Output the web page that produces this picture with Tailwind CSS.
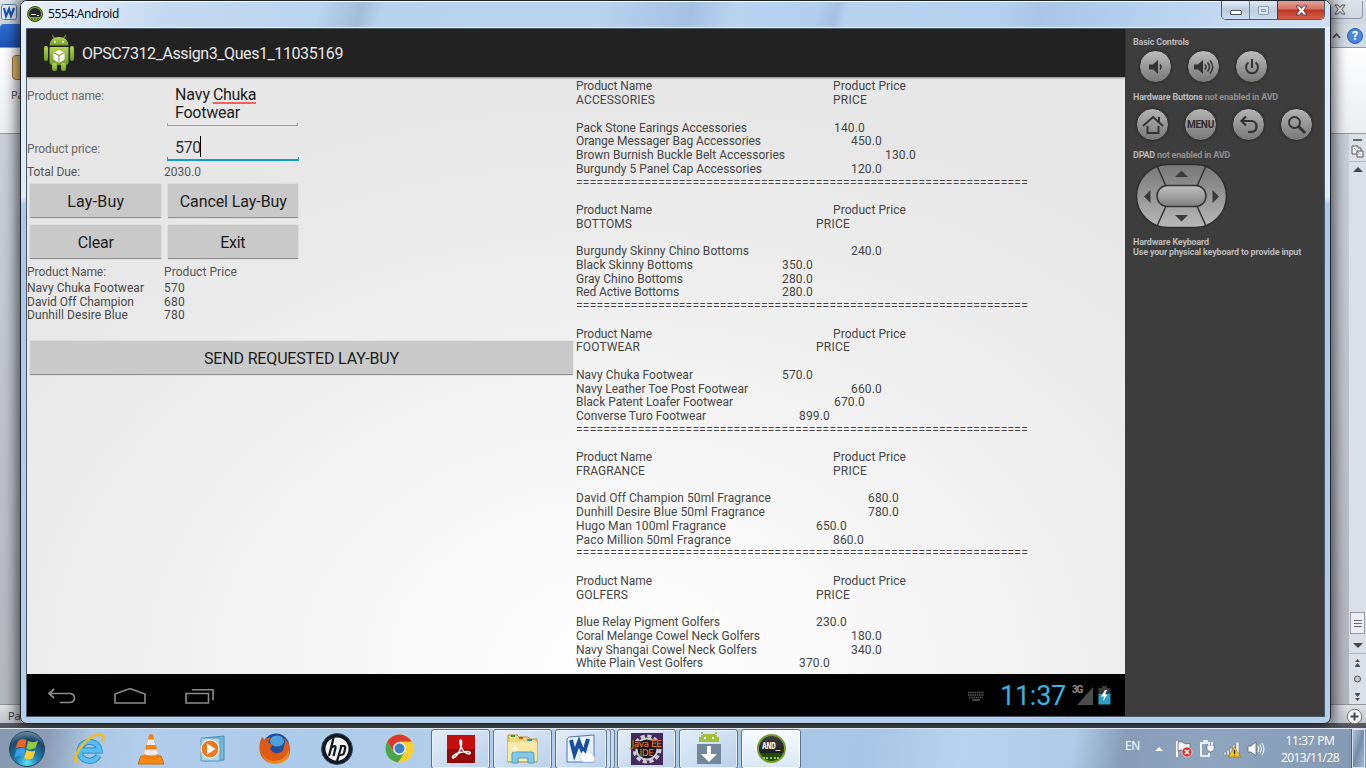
<!DOCTYPE html>
<html lang="en">
<head>
<meta charset="utf-8">
<title>5554:Android</title>
<script src="https://cdn.jsdelivr.net/npm/@tailwindcss/browser@4"></script>
</head>
<body class="relative h-[768px] w-[1366px] overflow-hidden bg-[#55585d] font-['Roboto',sans-serif]">

<!-- Word window in the background -->
<div class="absolute inset-x-0 top-0 flex h-[723px] flex-col">
  <div class="flex h-6 items-center justify-between bg-gradient-to-b from-[#dfe4ea] to-[#cdd5df] pl-px pt-px">
    <svg width="17" height="17" viewBox="0 0 17 17"><rect x=".5" y=".5" width="15" height="15" rx="2" fill="#e6effa" stroke="#5c86bd"/><path d="M3 4l2 8 3-7 2 7 3-8" fill="none" stroke="#1d58ac" stroke-width="2.2"/></svg>
    <div class="mr-[3px] flex h-[18px] w-[48px] -translate-y-[3px] items-center justify-center rounded-br border-r border-b border-[#8b95a3] pl-[2px]">
      <svg width="12" height="11" viewBox="0 0 12 11"><path d="M1 1h3l2 2.6L8 1h3L7.8 5.400 11 10H8L6 7.300 4 10H1l3.200-4.600z" fill="#f4f4f4" stroke="#50545c"/></svg>
    </div>
  </div>
  <div class="flex h-[23px] items-center justify-between bg-[#d5dce5]">
    <div class="h-full w-6 rounded-tl bg-gradient-to-b from-[#2d6fd3] to-[#1e54b4]"></div>
    <div class="flex items-center gap-1.5 pr-[3px]">
      <svg width="9" height="8" viewBox="0 0 9 8"><path d="M1 6l3.500-4L8 6" fill="none" stroke="#4c5059" stroke-width="1.800"/></svg>
      <div class="flex size-4 items-center justify-center rounded-full border border-[#2a5db4] bg-[#4b86dc] text-[12px] font-bold text-white">?</div>
    </div>
  </div>
  <div class="flex h-[87px] flex-col border-y border-[#9299a3] bg-gradient-to-b from-white to-[#eceef1]">
    <div class="mt-[7px] ml-3 h-[25px] w-4 rounded-sm border border-[#9c7a3c] bg-[#e2bd6c]"></div>
    <div class="mt-[7px] ml-[11px] font-['Open_Sans'] text-[11px] leading-4 text-[#444]">Pa</div>
  </div>
  <div class="flex flex-1 justify-end bg-gradient-to-b from-[#cbd0d7] to-[#b4b7bc]">
    <div class="flex w-[17px] flex-col items-center bg-[#dbdfe6]">
      <div class="mt-[5px] h-0.5 w-[9px] bg-[#666a70]"></div>
      <svg class="mt-1" width="13" height="13" viewBox="0 0 13 13" fill="#f3f0f4" stroke="#555a63"><path d="M1 1h6v2h3v6H1z"/><path d="M6 6h6v6H6z"/><path d="M3 3l7 7" stroke-dasharray="1 1"/></svg>
      <div class="mt-[3px] h-px w-full bg-[#b4b9c1]"></div>
      <div class="mt-[5px] size-0 border-x-[5px] border-b-[5px] border-x-transparent border-b-[#45484d]"></div>
      <div class="mt-auto flex h-[22px] w-[15px] flex-col items-center justify-center gap-[2px] border border-[#979ca5] bg-[#eceef2]"><i class="h-px w-2 bg-[#676b72]"></i><i class="h-px w-2 bg-[#676b72]"></i><i class="h-px w-2 bg-[#676b72]"></i></div>
      <div class="mt-[9px] size-0 border-x-[5px] border-t-[5px] border-x-transparent border-t-[#45484d]"></div>
      <div class="mt-[5px] h-px w-full bg-[#b4b9c1]"></div>
      <svg class="mt-1" width="9" height="46" viewBox="0 0 9 46" fill="#4d5056"><path d="M4.500 1L7 4H2zM4.500 5L7 8H2zM2 8h5v1H2z"/><circle cx="4.500" cy="21" r="3" fill="#c5c8cd" stroke="#4d5056"/><path d="M2 35h5v1H2zM2 36h5l-2.500 3zM2 40h5l-2.500 3z"/></svg>
    </div>
  </div>
  <div class="flex h-[19px] items-center justify-between border-t border-[#90949b] bg-gradient-to-b from-[#dfe1e5] to-[#c1c4ca] pr-[3px] pl-[8px]">
    <span class="pt-1 font-['Open_Sans'] text-[11px] text-[#333]">Pa</span>
    <svg class="mb-[-5px]" width="17" height="17" viewBox="0 0 17 17"><circle cx="8.500" cy="8.500" r="7.200" fill="#f4f4f6" stroke="#6f7379"/><path d="M8.500 4.500v8M4.500 8.500h8" stroke="#44474c" stroke-width="2"/></svg>
  </div>
</div>

<!-- Emulator window -->
<div class="absolute top-0 left-5 flex h-[724px] w-[1311px] flex-col rounded-[7px] border border-[#1e242c] bg-[linear-gradient(to_bottom,#e4eefa_0px,#dfeaf7_196px,#a9c9ea_204px,#b4cfec_100%)] px-[5px] pb-[6px] shadow-[0_0_14px_3px_rgba(0,0,0,.65)]">
  <div class="-mx-[5px] flex h-[27px] shrink-0 items-start rounded-t-[6px] border-t border-t-white bg-[linear-gradient(105deg,#e9f1fa_0px,#dce8f6_60px,#c5daf0_140px,#bbd4ee_290px,#a3bcd8_330px,#b9d2ec_350px,#b9d2ee_560px,#a6c1e0_650px,#b9d3ef_690px,#b2cfec_770px,#a6c2e0_790px,#b8d2ee_800px,#b5d0ec_950px,#a9c6e4_985px,#b5d0ed_1080px,#c6daf1_1180px,#d3e2f4_1300px)] shadow-[inset_0_-1px_0_#e8f2fb]">
    <div class="flex items-center gap-[5px] pt-[4px] pl-[6px]">
      <svg width="16" height="16" viewBox="0 0 16 16"><circle cx="8" cy="8" r="7.500" fill="#86ad27" stroke="#36460f"/><path d="M2 8a6 6 0 0 1 12 0q0 2-1 3H3Q2 10 2 8z" fill="#24282b"/><path d="M4 8.500h5M10 9.500h2" stroke="#fff"/><path d="M4 13h8" stroke="#345" stroke-dasharray="2 1"/></svg>
      <span class="font-['Open_Sans'] text-[12px] leading-4 text-black" data-w="71">5554:Android</span>
    </div>
    <div class="mr-[5px] ml-auto -mt-px flex h-[19px] overflow-hidden rounded-b-[5px] border border-t-0 border-[#4d5b6b]">
      <div class="flex w-[28px] items-end justify-center border-r border-[#6f8094] bg-gradient-to-b from-[#e3edf7] via-[#bccbdd] to-[#cfdeee] pb-[4px]"><i class="h-[5px] w-3 rounded-[1px] border border-[#4c5663] bg-white"></i></div>
      <div class="flex w-[27px] items-center justify-center bg-gradient-to-b from-[#dce8f5] via-[#bfcfe2] to-[#cbdcef]"><i class="flex h-[9px] w-[11px] items-center justify-center rounded-[1px] border border-[#8f9db0] bg-[#dce6f2]"><b class="h-[3px] w-[5px] border border-[#8f9db0]"></b></i></div>
      <div class="flex w-[47px] items-center justify-center border-l border-[#6b2a22] bg-[linear-gradient(to_bottom,#e3a398_0,#d4705f_45%,#bd3424_50%,#d5614b_100%)]"><svg width="13" height="11" viewBox="0 0 13 11"><path d="M1 1h3.500l2 2.500 2-2.500H12L8.600 5.400 12 10H8.500l-2-2.500-2 2.500H1l3.400-4.600z" fill="#fff" stroke="#5b3c43"/></svg></div>
    </div>
  </div>

  <div class="flex shrink-0 border border-[#4b5866]">
    <!-- Device screen -->
    <div class="flex w-[1098px] shrink-0 flex-col">
      <div class="relative z-10 flex h-[48px] items-center bg-[#222] pl-[16px] shadow-[0_1px_2px_rgba(0,0,0,.45)]">
        <svg width="32" height="38" viewBox="0 0 32 38"><defs><linearGradient id="dr" x2="0" y2="1"><stop stop-color="#b5d453"/><stop offset="1" stop-color="#6f9a2a"/></linearGradient></defs><g fill="url(#dr)"><path d="M9 1l3 4M23 1l-3 4" stroke="#7b9d32" stroke-width="1.200"/><path d="M6.500 11.500Q7 3 16 3t9.500 8.500z"/><path d="M6.500 13h19v15q0 3-3 3h-13q-3 0-3-3z"/><rect x="1" y="12" width="4" height="15" rx="2"/><rect x="27" y="12" width="4" height="15" rx="2"/><rect x="9" y="29" width="5" height="8" rx="2"/><rect x="18" y="29" width="5" height="8" rx="2"/></g><circle cx="12" cy="8" r=".9" fill="#fff"/><circle cx="20" cy="8" r=".9" fill="#fff"/><path d="M16 16l5.500 2.500v7L16 29l-5.500-3.500v-7z" fill="#fff"/><path d="M10.500 18.500L16 21.500l5.500-3M16 21.500V29" fill="none" stroke="#84a93c" stroke-width="1.200"/></svg>
        <span class="ml-[7px] pt-[2px] text-[16px] text-[#e8e8e8]" data-w="261">OPSC7312_Assign3_Ques1_11035169</span>
      </div>

      <div class="flex h-[597px] overflow-hidden bg-[radial-gradient(ellipse_760px_560px_at_590px_590px,#fdfdfd_0%,#fbfbfb_20%,#f0f0f0_62%,#e7e7e7_100%)] text-[12px] text-[#555]">
        <!-- Lay-buy form -->
        <div class="flex w-[549px] flex-col">
          <div class="grid h-[52px] grid-cols-[137px_1fr]">
            <div class="pt-[10px] leading-[18px]"><span data-w="77" class="text-[#686868]">Product name:</span></div>
            <div class="flex h-[49px] w-[136px] flex-col pl-[3px]">
              <div class="ml-[8px] pt-[9px] text-[16px] leading-[18px] text-[#1c1c1c]"><span data-w="35">Navy</span> <span class="relative -ml-px" data-w="43">Chuka<i class="absolute inset-x-0 bottom-[0px] h-[2px] bg-[#f4605c]"></i></span><br><span data-w="65">Footwear</span></div>
              <div class="mt-auto h-[3px] w-[131px] border-x border-b border-[#a0a0a0]"></div>
            </div>
          </div>
          <div class="grid h-[34px] grid-cols-[137px_1fr]">
            <div class="pt-[11px] leading-[18px]"><span data-w="73" class="text-[#686868]">Product price:</span></div>
            <div class="flex h-[32px] w-[136px] flex-col pl-[3px]">
              <div class="ml-[8px] flex h-[28px] pt-[7px] text-[16px] leading-[24px] text-[#333]"><span data-w="26">570</span><i class="-ml-px h-[21px] w-px bg-black"></i></div>
              <div class="mt-auto h-[4px] w-[132px] border-x border-b-2 border-[#0e9dcd]"></div>
            </div>
          </div>
          <div class="grid h-[18px] grid-cols-[137px_1fr] leading-[19px]"><span><span data-w="53">Total Due:</span></span><span><span data-w="37">2030.0</span></span></div>
          <div class="mt-[3px] ml-[3px] grid w-[268px] grid-cols-2 gap-x-[7px] gap-y-[7px] text-[16px] text-[#1c1c1c]">
            <div class="flex h-[34px] items-center justify-center border-b border-[#909090] bg-[#c9c9c9] pt-0.5 pl-px shadow-[0_0_1px_#aaa]"><span data-w="57">Lay-Buy</span></div>
            <div class="flex h-[34px] items-center justify-center border-b border-[#909090] bg-[#c9c9c9] pt-0.5 pl-px shadow-[0_0_1px_#aaa]"><span data-w="107">Cancel Lay-Buy</span></div>
            <div class="flex h-[34px] items-center justify-center border-b border-[#909090] bg-[#c9c9c9] pt-0.5 pl-px shadow-[0_0_1px_#aaa]"><span data-w="36">Clear</span></div>
            <div class="flex h-[34px] items-center justify-center border-b border-[#909090] bg-[#c9c9c9] pt-0.5 shadow-[0_0_1px_#aaa]"><span data-w="25">Exit</span></div>
          </div>
          <div class="mt-[5px] grid h-[17px] grid-cols-[137px_1fr] leading-[17px]"><span><span data-w="79">Product Name:</span></span><span><span data-w="73">Product Price</span></span></div>
          <div class="mt-px grid grid-cols-[137px_1fr] leading-[13.7px] text-[#484848]">
            <span><span data-w="117">Navy Chuka Footwear</span></span><span><span data-w="21">570</span></span>
            <span><span data-w="107">David Off Champion</span></span><span><span data-w="21">680</span></span>
            <span><span data-w="101">Dunhill Desire Blue</span></span><span><span data-w="21">780</span></span>
          </div>
          <div class="mt-[18px] ml-[3px] flex h-[34px] w-[543px] items-center justify-center border-b border-[#909090] bg-[#cacaca] pt-0.5 text-[16px] text-[#1c1c1c] shadow-[0_0_1px_#aaa]"><span data-w="195">SEND REQUESTED LAY-BUY</span></div>
        </div>

        <!-- Price list -->
        <div id="prices" class="flex flex-col pt-[3.400px] leading-[13.740px] text-[#454545]"></div>
      </div>

      <!-- Navigation bar -->
      <div class="flex h-[42px] items-center bg-black pt-px">
        <svg class="ml-[20px]" width="30" height="18" viewBox="0 0 30 18" fill="none" stroke="#8b8b8b" stroke-width="1.700"><path d="M7 2L2 6.500 7 11M2 6.500h20q5.500 0 5.500 4.500t-5.500 4.500h-9"/></svg>
        <svg class="ml-[36px]" width="34" height="18" viewBox="0 0 34 18" fill="none" stroke="#8b8b8b" stroke-width="1.600"><path d="M2 16V7L17 1.500 32 7v9z"/></svg>
        <svg class="ml-[37px]" width="32" height="18" viewBox="0 0 32 18" fill="none" stroke="#8b8b8b" stroke-width="1.600"><path d="M2 6.500h22.500V16H2zM8 2.800h21v10.500"/></svg>
        <svg class="mt-px ml-auto" width="18" height="10" viewBox="0 0 18 10" stroke="#5d5d5d" stroke-width="1.500"><path d="M1 1.500h16M1 4h16M2 6.500h14" stroke-dasharray="1.500 .7"/><path d="M5 9h8"/></svg>
        <span class="ml-[15px] pt-[2px] text-[27px] leading-none text-[#33b5e5]" data-w="66">11:37</span>
        <span class="mb-[11px] ml-[6px] text-[10px] leading-none font-bold text-[#8c8c8c]" data-w="10">3G</span>
        <svg class="-ml-[5px]" width="16" height="18" viewBox="0 0 16 18"><path d="M0 18L16 0v18z" fill="#4b4b4b"/></svg>
        <svg class="mr-[14px] ml-[5px]" width="13" height="19" viewBox="0 0 13 19"><path d="M4 0h5v2h3.500v7H.5V2H4z" fill="#3b3b3b"/><path d="M.5 8h12v10.500H.5z" fill="#2f9cc6"/><path d="M7 4L3 10.500h3L5 15l4.500-6.500H7L9 4z" fill="#fff"/></svg>
      </div>
    </div>

    <!-- Hardware controls -->
    <div class="flex flex-1 flex-col bg-[#3d3d3d] pl-2 text-[9px] leading-[10px] font-bold text-[#b9b9b9]">
      <div class="mt-[8px]"><span data-w="56">Basic Controls</span></div>
      <div class="mt-[3px] ml-[6px] flex gap-[15px]">
        <div class="flex size-[33px] items-center justify-center rounded-full border border-[#303030] bg-gradient-to-b from-[#bdbdbd] to-[#777] shadow-[0_0_2px_#222]"><svg width="19" height="18" viewBox="0 0 19 18"><path d="M3 6.500h4L12 2v14l-5-4.500H3z" fill="#333"/><path d="M14 6.500q2 2.500 0 5" fill="none" stroke="#333" stroke-width="1.500"/></svg></div>
        <div class="flex size-[33px] items-center justify-center rounded-full border border-[#303030] bg-gradient-to-b from-[#bdbdbd] to-[#777] shadow-[0_0_2px_#222]"><svg width="23" height="18" viewBox="0 0 23 18"><path d="M2 6.500h4L11 2v14l-5-4.500H2z" fill="#333"/><path d="M13 6.500q2 2.500 0 5M15.500 4.500q4 4.500 0 9M18 2.500q5.500 6.500 0 13" fill="none" stroke="#333" stroke-width="1.500"/></svg></div>
        <div class="flex size-[33px] items-center justify-center rounded-full border border-[#303030] bg-gradient-to-b from-[#bdbdbd] to-[#777] shadow-[0_0_2px_#222]"><svg width="18" height="20" viewBox="0 0 18 20" fill="none" stroke="#333" stroke-width="2"><path d="M9 2v9M5.500 5.500a6 6 0 1 0 7 0"/></svg></div>
      </div>
      <div class="mt-[9px] whitespace-nowrap"><span data-w="145">Hardware Buttons <span class="text-[#8f8f8f]">not enabled in AVD</span></span></div>
      <div class="mt-[6px] ml-[3px] flex gap-[15px]">
        <div class="flex size-[33px] items-center justify-center rounded-full border border-[#303030] bg-gradient-to-b from-[#b5b5b5] to-[#777] shadow-[0_0_2px_#222]"><svg width="24" height="22" viewBox="0 0 24 22" fill="none" stroke="#333" stroke-width="2"><path d="M2 12L12 3l10 9M18 8V3M6.500 12v7H17.500V12"/></svg></div>
        <div class="flex size-[33px] items-center justify-center rounded-full border border-[#303030] bg-gradient-to-b from-[#b5b5b5] to-[#777] text-[10px] text-[#2c2c2c] shadow-[0_0_2px_#222]"><span data-w="27">MENU</span></div>
        <div class="flex size-[33px] items-center justify-center rounded-full border border-[#303030] bg-gradient-to-b from-[#b5b5b5] to-[#777] shadow-[0_0_2px_#222]"><svg width="20" height="20" viewBox="0 0 20 20" fill="none" stroke="#333" stroke-width="2.200"><path d="M7 1.500L2.500 6 7 10.500M2.500 6H12q5.500 0 5.500 5.500T12 17H9"/></svg></div>
        <div class="flex size-[33px] items-center justify-center rounded-full border border-[#303030] bg-gradient-to-b from-[#b5b5b5] to-[#777] shadow-[0_0_2px_#222]"><svg width="20" height="20" viewBox="0 0 20 20" fill="none" stroke="#333" stroke-width="2"><circle cx="7.500" cy="7.500" r="5.500"/><path d="M11.500 11.500L18 18" stroke-width="2.800"/></svg></div>
      </div>
      <div class="mt-[9px]"><span data-w="97">DPAD <span class="text-[#8f8f8f]">not enabled in AVD</span></span></div>
      <svg class="mt-[2px] ml-[2px]" width="94" height="68" viewBox="0 0 94 68"><defs><linearGradient id="pad" x2="0" y2="1"><stop stop-color="#777"/><stop offset="1" stop-color="#b8b8b8"/></linearGradient><linearGradient id="mid" x2="0" y2="1"><stop stop-color="#c0c0c0"/><stop offset="1" stop-color="#808080"/></linearGradient></defs><rect x="1.500" y="2.500" width="90" height="63" rx="31.500" fill="url(#pad)" stroke="#2d2d2d" stroke-width="1.500"/><path d="M22 4l9 20M71 4l-9 20M31 44l-9 20M62 44l9 20" stroke="#333" stroke-width="1.500"/><rect x="22" y="23.500" width="49" height="21" rx="10.500" fill="url(#mid)" stroke="#333" stroke-width="1.500"/><path d="M40 15l6.500-6.500L53 15zM40 53h13l-6.500 6.500zM15.500 28v13L9 34.500zM77.500 28v13l6.500-6.500z" fill="#3a3a3a"/></svg>
      <div class="mt-[7px]"><span data-w="76">Hardware Keyboard</span></div>
      <div class="whitespace-nowrap"><span data-w="168">Use your physical keyboard to provide input</span></div>
    </div>
  </div>
</div>

<!-- Taskbar -->
<div class="absolute inset-x-0 bottom-0 flex h-10 items-center border-t border-[#dce9f5] bg-[linear-gradient(100deg,#8799af_0px,#8c9eb5_50px,#abc6e3_90px,#b1ceec_140px,#accbe9_300px,#b4cfec_500px,#a6c5e4_850px,#b7d3ef_950px,#afcbe9_1060px,#889db5_1110px,#8fa5be_1200px,#8298b0_1366px)]">
  <div class="flex w-[58px] justify-start pl-[8px]">
    <svg width="38" height="38" viewBox="0 0 38 38"><defs><radialGradient id="orb" cx=".5" cy=".9" r=".9"><stop stop-color="#5ee1fb"/><stop offset=".35" stop-color="#1c82b4"/><stop offset=".75" stop-color="#1d466a"/><stop offset="1" stop-color="#7693aa"/></radialGradient></defs><circle cx="19" cy="19" r="17.500" fill="url(#orb)" stroke="#27435d"/><path d="M10 11q5-3.500 8.500-.5L16.500 18q-4-2-9 .5z" fill="#ee6327"/><path d="M20 11q5 2.500 10-.5L27.500 18q-5 2.500-9 .5z" fill="#92c83e"/><path d="M7 20q5-3 9 0l-2 7.500q-4-2-9 .5z" transform="translate(1.500 -.5)" fill="#3ba0e8"/><path d="M18.500 20q5 2.500 9 .5L25 28q-5 2.500-9 0z" fill="#fccb2e"/></svg>
  </div>
  <div class="flex w-[62px] justify-center"><svg width="34" height="34" viewBox="0 0 34 34"><path d="M26.500 22.500a10 9.500 0 1 1 1-5H10" transform="translate(0 1)" fill="none" stroke="#1e7fbf" stroke-width="6"/><path d="M26.500 22.500a10 9.500 0 1 1 1-5H10" transform="translate(0 1)" fill="none" stroke="#58bdf0" stroke-width="4.600"/><path d="M5 31C-3 24 20-2 30 3q3 2 0 7" fill="none" stroke="#f3bd22" stroke-width="2.600"/></svg></div>
  <div class="flex w-[62px] justify-center"><svg width="28" height="32" viewBox="0 0 28 32"><path d="M4 23h20l3 8H1z" fill="#f58a17" stroke="#cc6a08"/><path d="M12 2q2-2 4 0l6 22q-8 5-16 0z" fill="#f47e12"/><path d="M11 6.500h6l1.500 5.500h-9zM8 16.500h12l1.200 4.500q-7 3-14.400 0z" fill="#ececec"/></svg></div>
  <div class="flex w-[62px] justify-center"><svg width="30" height="28" viewBox="0 0 30 28"><path d="M6 3l20-2v24L6 26z" fill="#75b8d9" stroke="#458eb5"/><path d="M3 3h19v23H3z" fill="#a8d6ec" stroke="#5d9dbe"/><circle cx="12" cy="14" r="9" fill="#f0781e" stroke="#fff"/><path d="M9 8.500l8.500 5.500L9 19.500z" fill="#fff"/></svg></div>
  <div class="flex w-[62px] justify-center"><svg width="34" height="34" viewBox="0 0 34 34"><circle cx="18" cy="15" r="13.500" fill="#1b4f9d"/><ellipse cx="19" cy="9" rx="7" ry="5.500" fill="#4aa0dd"/><path d="M2 10L4 5l3 3q3-3 6-2-3 2-3 5l5 1-3 4q2 6 8 5 6-1 6-7 2-4 0-8 5 4 6 10 1 9-6 13-8 5-17 1Q-1 24 2 10z" fill="#df5a16"/><path d="M4 14q-1 14 12 15 11 0 15-11 1 13-12 14Q3 32 4 14z" fill="#f49a20" opacity=".7"/></svg></div>
  <div class="flex w-[62px] justify-center"><svg width="34" height="34" viewBox="0 0 34 34"><circle cx="17" cy="17" r="15.500" fill="#10171f" stroke="#354960"/><circle cx="17" cy="17" r="11.500" fill="#f2f2f2"/><path d="M13.500 6L9 24M11 16q5-4 4.500 0L13.500 24M21.500 14L17 29M20 14h3.500q2.500 0 1.500 3l-1 4q-.6 2-3 2h-3" fill="none" stroke="#10171f" stroke-width="2.200"/></svg></div>
  <div class="flex w-[62px] justify-center"><svg width="29" height="29" viewBox="0 0 29 29"><circle cx="14.500" cy="14.500" r="14" fill="#fbcf2f"/><path d="M2.400 7.500A14 14 0 0 1 26.600 7.500H14.500L8.500 18z" fill="#d93a2d"/><path d="M2.400 7.500A14 14 0 0 0 13 28.500L20 18H8.500z" fill="#4ba64a"/><circle cx="14.500" cy="14.500" r="6.500" fill="#f4f4f4"/><circle cx="14.500" cy="14.500" r="5" fill="#3b7fcf"/></svg></div>
  <div class="ml-px flex h-10 gap-[3px]">
    <div class="flex w-[59px] items-center justify-center rounded-[3px] border border-[#5d7188] bg-gradient-to-br from-[#e4edf7] to-[#b9d0ea] shadow-[inset_0_0_0_1px_#e9f2fb]"><svg width="28" height="28" viewBox="0 0 28 28"><path d="M0 0h28v28H0z" fill="#c40d0f"/><path d="M0 14h28v14H0z" fill="#940809"/><path d="M13.500 5q2 0 .5 7-3 9-7.500 11-2 0 0-2.500 5-4 15-4 3 1 1 2.500-5 0-8.500-7Q12 5 13.500 5z" fill="none" stroke="#fff" stroke-width="1.500"/></svg></div>
    <div class="flex w-[59px] items-center justify-center rounded-[3px] border border-[#5d7188] bg-gradient-to-br from-[#e4edf7] to-[#b9d0ea] shadow-[inset_0_0_0_1px_#e9f2fb]"><svg width="34" height="32" viewBox="0 0 34 32"><path d="M2 2h9l2 2h9l2 2h7v23H2z" fill="#f0d779" stroke="#b6943b"/><path d="M4 9h27v19H2V9z" fill="#f8e9a5"/><path d="M5 3h4" stroke="#3a9a48" stroke-width="2"/><path d="M13 5h4" stroke="#d64b30" stroke-width="2"/><path d="M21 7h5" stroke="#3583c7" stroke-width="2"/><path d="M6 30V21q0-2 2-2h18q2 0 2 2v9h-6v-5H12v5z" fill="#83c8e6" stroke="#4d9dc3"/><path d="M9 12l1 3 3 1-3 1-1 3-1-3-3-1 3-1z" fill="#fff"/></svg></div>
    <div class="flex w-[60px]">
      <div class="flex w-[52px] items-center justify-center rounded-[3px] border border-[#5d7188] bg-gradient-to-br from-[#e4edf7] to-[#b9d0ea] shadow-[inset_0_0_0_1px_#e9f2fb]"><svg width="30" height="30" viewBox="0 0 30 30"><path d="M3 3l25-2v27H1V5z" fill="#e9f1fb" stroke="#4978b5"/><path d="M5 6l3.500 14L13 8l4.500 12L22 5" fill="none" stroke="#174f9f" stroke-width="4"/><path d="M13 23l4-6 3 3 3-5 6 9-1 4H17z" fill="#fff" stroke="#b7c7de" stroke-width=".7"/></svg></div>
      <div class="w-1 rounded-r-[3px] border-y border-r border-[#6f849c] bg-[#cfdff0]"></div><div class="w-1 rounded-r-[3px] border-y border-r border-[#6f849c] bg-[#c5d7eb]"></div>
    </div>
    <div class="-ml-px flex w-[59px] items-center justify-center rounded-[3px] border border-[#5d7188] bg-gradient-to-br from-[#e4edf7] to-[#b9d0ea] shadow-[inset_0_0_0_1px_#e9f2fb]">
      <div class="relative flex size-8 flex-col items-center bg-[#44295d] pt-[7px] font-['DejaVu_Sans'] text-[9px] leading-[9px] text-[#ff8420] [text-shadow:0_0_1px_#1a1420,0_0_2px_#1a1420,0_0_1px_#1a1420]">
        <svg class="absolute inset-0" width="32" height="32" viewBox="0 0 32 32" fill="none"><circle cx="16" cy="16" r="13" stroke="#cfcfd4" stroke-width="3" stroke-dasharray="4.200 2.600"/><circle cx="16" cy="16" r="10.500" fill="#201b28" stroke="#cfcfd4" stroke-width="2"/><path d="M1 8h30v8H1z" fill="#201b28" opacity=".75"/></svg>
        <span class="relative block whitespace-nowrap" data-w="30">Java EE</span><span class="relative block" data-w="14">IDE</span>
      </div>
    </div>
    <div class="flex w-[59px] items-center justify-center rounded-[3px] border border-[#5d7188] bg-gradient-to-br from-[#e4edf7] to-[#b9d0ea] shadow-[inset_0_0_0_1px_#e9f2fb]"><svg width="24" height="33" viewBox="0 0 24 33"><path d="M4 0h2v2h12V0h2v2h-2v1h2v2h2v5H2V5h2V3h2V2H4z" fill="#a2c139"/><path d="M7 5h2v2H7zM15 5h2v2h-2z" fill="#e5eef8"/><path d="M0 12h24v20H0z" fill="#71879b"/><path d="M10 14h4v8h6l-8 8-8-8h6z" fill="#fff"/></svg></div>
    <div class="flex w-[60px] items-center justify-center rounded-[3px] border border-[#5d7188] bg-gradient-to-b from-[#f8fbfe] to-[#d8e7f6] shadow-[inset_0_0_0_1px_#fff]">
      <div class="relative flex size-[29px] items-center justify-center rounded-full border-2 border-[#789c28] bg-[linear-gradient(to_bottom,#3c4043_0,#1c1f20_66%,#27480d_68%,#1f5410_100%)] pb-1 font-['DejaVu_Sans_Mono'] text-[8px] leading-none font-bold text-white"><span data-w="18">AND_</span><i class="absolute bottom-[2px] h-0 w-4 border-b-2 border-dotted border-[#9ccb2d]"></i></div>
    </div>
  </div>

  <!-- Tray -->
  <div class="ml-auto flex items-center self-stretch text-white">
    <span class="mb-[5px] font-['Open_Sans'] text-[12px]" data-w="15">EN</span>
    <i class="ml-[15px] size-0 border-x-4 border-b-4 border-x-transparent border-b-white"></i>
    <svg class="ml-[12px]" width="18" height="18" viewBox="0 0 18 18"><path d="M2 1v16" stroke="#fff" stroke-width="2"/><path d="M3 2q4-1 6 1t6 0v8q-3 2-6 0t-6 0z" fill="#f4f6f9" stroke="#4c596a" stroke-width=".7"/><circle cx="12" cy="12" r="5" fill="#d92d26" stroke="#fff" stroke-width=".6"/><path d="M9.800 9.800l4.400 4.400m0-4.400l-4.400 4.400" stroke="#fff" stroke-width="1.500"/></svg>
    <svg class="ml-[6px]" width="16" height="18" viewBox="0 0 16 18" fill="none" stroke="#fff" stroke-width="1.700"><path d="M9 3H2v13h8v-3M4 1h5"/><path d="M8 5h7v4q0 2-3.500 3Q8 11 8 9z" fill="#fff" stroke="#566579" stroke-width=".7"/><path d="M10 2v3M13 2v3"/></svg>
    <svg class="ml-[8px]" width="18" height="18" viewBox="0 0 18 18"><path d="M1 12h2v3H1zM4 10h2v5H4zM7 8h2v7H7zM10 5h2v10h-2zM13 2h3v13h-3z" fill="#f1f3f6" stroke="#59697c" stroke-width=".4"/><path d="M11.500 6.500L17.500 17h-12z" fill="#f7c82a" stroke="#8d6b14" stroke-width=".6"/><path d="M11.500 10v4M11.500 15v1" stroke="#222" stroke-width="1.300"/></svg>
    <svg class="ml-[6px]" width="18" height="16" viewBox="0 0 18 16"><path d="M1 5h3l5-4v14l-5-4H1z" fill="#fff" stroke="#546377" stroke-width=".8"/><path d="M11 5q1.500 3 0 6M13 3.500q3 4.500 0 9M15 2q4 6 0 12" fill="none" stroke="#fff"/></svg>
    <div class="ml-[16px] flex w-[58px] flex-col items-center pt-px font-['Open_Sans'] text-[12px] leading-[17px] whitespace-nowrap"><span data-w="49">11:37 PM</span><span data-w="58">2013/11/28</span></div>
    <div class="ml-[13px] h-full w-[13px] border border-[#d5e1ee] bg-gradient-to-br from-[#b3c5d9] via-[#748da7] to-[#a5bad1] shadow-[-1px_0_0_#4c5c6e]"></div>
    <div class="w-px"></div>
  </div>
</div>

<script>
// Each block: category, category width, left offset of its PRICE label, then [name, name width, price, price offset].
const blocks = [
  ["ACCESSORIES", 79, 257, [["Pack Stone Earings Accessories",171,"140.0",258],["Orange Messager Bag Accessories",185,"450.0",275],["Brown Burnish Buckle Belt Accessories",209,"130.0",309],["Burgundy 5 Panel Cap Accessories",186,"120.0",275]]],
  ["BOTTOMS", 56, 240, [["Burgundy Skinny Chino Bottoms",173,"240.0",275],["Black Skinny Bottoms",117,"350.0",206],["Gray Chino Bottoms",107,"280.0",206],["Red Active Bottoms",103,"280.0",206]]],
  ["FOOTWEAR", 64, 240, [["Navy Chuka Footwear",117,"570.0",206],["Navy Leather Toe Post Footwear",172,"660.0",275],["Black Patent Loafer Footwear",157,"670.0",258],["Converse Turo Footwear",130,"899.0",223]]],
  ["FRAGRANCE", 69, 257, [["David Off Champion 50ml Fragrance",195,"680.0",292],["Dunhill Desire Blue 50ml Fragrance",189,"780.0",292],["Hugo Man 100ml Fragrance",150,"650.0",240],["Paco Million 50ml Fragrance",155,"860.0",257]]],
  ["GOLFERS", 52, 240, [["Blue Relay Pigment Golfers",144,"230.0",240],["Coral Melange Cowel Neck Golfers",184,"180.0",275],["Navy Shangai Cowel Neck Golfers",181,"340.0",275],["White Plain Vest Golfers",127,"370.0",223]]]
];
const row = (a, aw, b, bw, x) => `<div class="flex h-[13.740px] whitespace-nowrap"><div style="width:${x}px"><span data-w="${aw}">${a}</span></div><div><span data-w="${bw}">${b}</span></div></div>`;
document.getElementById("prices").innerHTML = blocks.map(([cat, cw, px, items], i) =>
  row("Product Name", 76, "Product Price", 73, 257) + row(cat, cw, "PRICE", 34, px) + '<div class="h-[13.740px]"></div>' +
  items.map(([n, w, p, x]) => row(n, w, p, 31, x)).join("") +
  (i < 4 ? `<div class="h-[13.740px] whitespace-nowrap"><span data-w="452">${"=".repeat(66)}</span></div><div class="h-[13.740px]"></div>` : "")
).join("");
// Tracks every label to its set width.
function fit() {
  document.querySelectorAll("[data-w]").forEach(e => {
    e.style.letterSpacing = "0px";
    const r = document.createRange();
    r.selectNodeContents(e);
    e.style.letterSpacing = ((+e.dataset.w - r.getBoundingClientRect().width) / e.textContent.length).toFixed(3) + "px";
  });
}
fit();
addEventListener("load", () => { fit(); requestAnimationFrame(fit); document.fonts.ready.then(fit); setTimeout(fit, 100); });
</script>
</body>
</html>
